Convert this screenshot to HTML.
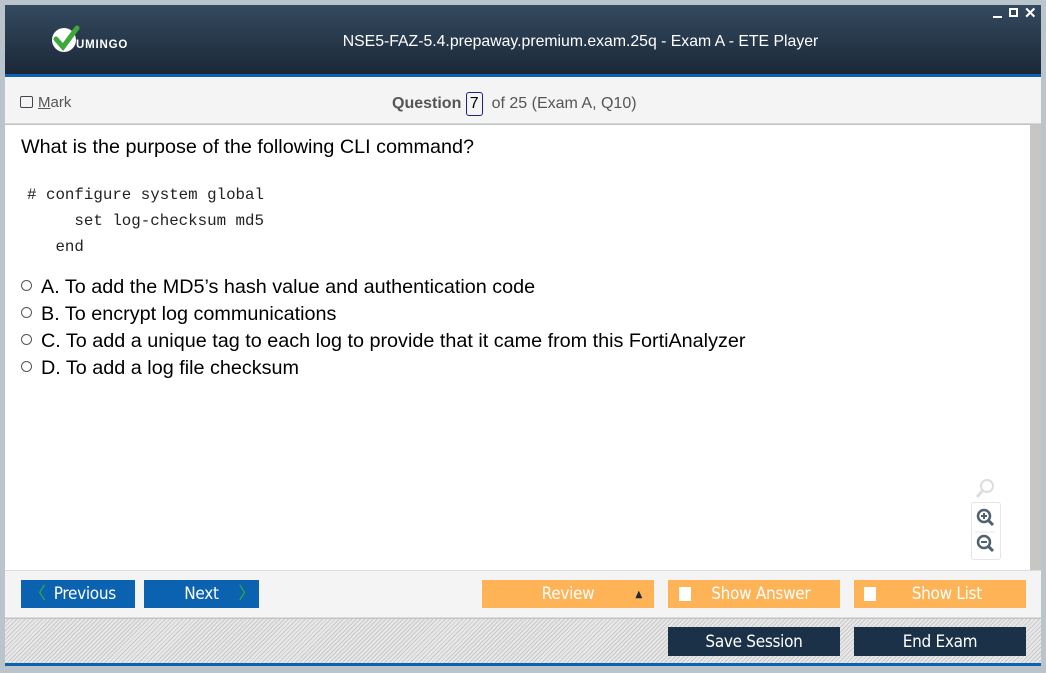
<!DOCTYPE html>
<html><head><meta charset="utf-8"><style>
*{margin:0;padding:0;box-sizing:border-box}
body{width:1046px;height:673px;background:#b9c5cb;position:relative;overflow:hidden;font-family:"Liberation Sans",sans-serif}
.a{position:absolute}
.hdr{left:5px;top:5px;width:1036px;height:69px;background:linear-gradient(#344a60,#1b2838)}
.btn{position:absolute;height:28px;color:#fff;font-size:17px;line-height:29px;text-align:center;font-family:"DejaVu Sans Condensed","Liberation Sans Narrow","Liberation Sans",sans-serif;letter-spacing:-0.3px}
.opt{position:absolute;left:21px;font-size:19.8px;color:#000}
.opt i{display:inline-block;width:11px;height:11px;border:1px solid #555;border-radius:50%;margin-right:9px;vertical-align:2px}
.cb{position:absolute;width:12px;height:14px;background:#fff;top:7px}
</style></head><body>
<div class="a hdr"></div>
<svg class="a" style="left:50px;top:24px" width="32" height="30" viewBox="0 0 32 30"><circle cx="14" cy="16" r="12" fill="#fff"/><path d="M6 15 L13 23 L27 4" stroke="#3fa83a" stroke-width="5" fill="none" stroke-linecap="round"/></svg>
<div class="a" style="left:76px;top:39px;color:#fff;font-weight:bold;font-size:11.5px;letter-spacing:0.8px">UMINGO</div>
<div class="a" style="left:0;width:1161px;text-align:center;top:33px;color:#fff;font-size:15.8px">NSE5-FAZ-5.4.prepaway.premium.exam.25q - Exam A - ETE Player</div>
<div class="a" style="left:993px;top:16px;width:9px;height:2px;background:#fff"></div>
<div class="a" style="left:1009px;top:8px;width:9px;height:9px;border:2px solid #fff"></div>
<div class="a" style="left:1024px;top:4px;color:#fff;font-size:15px;font-weight:bold">✕</div>
<div class="a" style="left:5px;top:74px;width:1036px;height:3px;background:#0a62b0"></div>
<div class="a" style="left:5px;top:77px;width:1036px;height:47px;background:#f4f4f4;border-bottom:1px solid #d6d6d6"></div>
<div class="a" style="left:20px;top:96px;width:13px;height:12px;border:1px solid #445;border-radius:2px"></div>
<div class="a" style="left:38px;top:94px;font-size:15px;color:#555"><u>M</u>ark</div>
<div class="a" style="left:392px;top:92px;font-size:16px;color:#555"><b>Question</b> <span style="display:inline-block;border:1px solid #1a237e;border-radius:3px;padding:0 3px;color:#000;line-height:22px">7</span>&nbsp; of 25 (Exam A, Q10)</div>
<div class="a" style="left:5px;top:125px;width:1025px;height:445px;background:#fff"></div>
<div class="a" style="left:1030px;top:125px;width:11px;height:445px;background:#c8c6c2"></div>
<div class="a" style="left:21px;top:136px;font-size:19.8px;color:#000">What is the purpose of the following CLI command?</div>
<pre class="a" style="left:27px;top:182px;font-family:'Liberation Mono',monospace;font-size:15.8px;line-height:26px;color:#222"># configure system global
     set log-checksum md5
   end</pre>
<div class="opt" style="top:276px"><i></i>A. To add the MD5’s hash value and authentication code</div>
<div class="opt" style="top:303px"><i></i>B. To encrypt log communications</div>
<div class="opt" style="top:330px"><i></i>C. To add a unique tag to each log to provide that it came from this FortiAnalyzer</div>
<div class="opt" style="top:357px"><i></i>D. To add a log file checksum</div>
<svg class="a" style="left:973px;top:476px" width="26" height="26"><circle cx="14" cy="10" r="6" fill="none" stroke="#ddd" stroke-width="2"/><path d="M10 14 L4 21" stroke="#ddd" stroke-width="3"/></svg>
<div class="a" style="left:971px;top:502px;width:30px;height:58px;border:1px solid #e6e6e6;border-radius:3px"></div>
<svg class="a" style="left:974px;top:506px" width="24" height="52"><circle cx="10" cy="10" r="6" fill="none" stroke="#506070" stroke-width="2.5"/><path d="M7 10h6M10 7v6" stroke="#506070" stroke-width="2"/><path d="M14 14l5 5M14 40l5 5" stroke="#506070" stroke-width="3"/><circle cx="10" cy="36" r="6" fill="none" stroke="#506070" stroke-width="2.5"/><path d="M7 36h6" stroke="#506070" stroke-width="2"/><path d="M1 26h20" stroke="#e6e6e6"/></svg>
<div class="a" style="left:5px;top:570px;width:1036px;height:48px;background:#f4f4f4;border-top:1px solid #ddd;border-bottom:1px solid #ddd"></div>
<div class="btn" style="left:21px;top:580px;width:114px;background:#0a62b0"><span style="position:absolute;left:8px;color:#3fa83a">〈</span>&nbsp;&nbsp;&nbsp;Previous</div>
<div class="btn" style="left:144px;top:580px;width:115px;background:#0a62b0">Next<span style="position:absolute;right:4px;color:#3fa83a">〉</span></div>
<div class="btn" style="left:482px;top:580px;width:172px;background:#ffb357">Review<span style="position:absolute;right:12px;font-size:10px;color:#1b2838">▲</span></div>
<div class="btn" style="left:668px;top:580px;width:172px;background:#ffb357"><div class="cb" style="left:11px"></div>&nbsp;&nbsp;&nbsp;Show Answer</div>
<div class="btn" style="left:854px;top:580px;width:172px;background:#ffb357"><div class="cb" style="left:10px"></div>&nbsp;&nbsp;&nbsp;Show List</div>
<div class="a" style="left:5px;top:619px;width:1036px;height:44px;background:repeating-linear-gradient(135deg,#e8e8e8 0 2px,#c9c9c9 2px 3px)"></div>
<div class="btn" style="left:668px;top:627px;width:172px;height:29px;line-height:30px;background:#1b3147">Save Session</div>
<div class="btn" style="left:854px;top:627px;width:172px;height:29px;line-height:30px;background:#1b3147">End Exam</div>
<div class="a" style="left:5px;top:663px;width:1036px;height:3px;background:#0a62b0"></div>
</body></html>
